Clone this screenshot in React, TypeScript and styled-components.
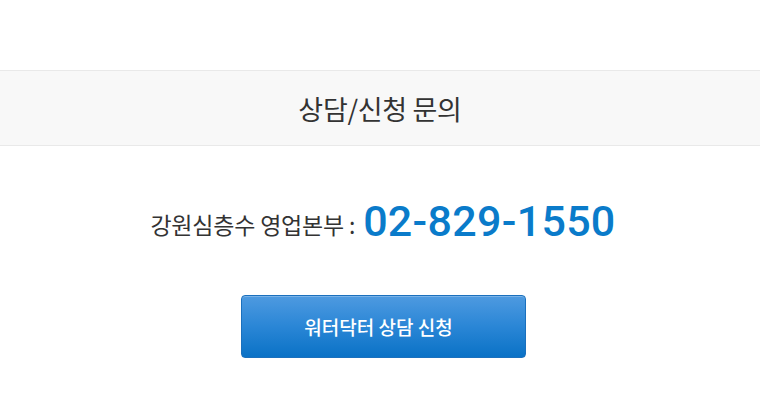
import styled, { createGlobalStyle } from 'styled-components';

const GlobalStyle = createGlobalStyle`
  html, body {
    margin: 0;
    padding: 0;
    background-color: #ffffff;
  }
  body {
    font-family: 'Noto Sans CJK KR', 'Noto Sans', sans-serif;
  }
`;

const App = () => {
  return (
    <>
      <GlobalStyle />
      <PageWrapper>
        <TitleBar>
          <Title>상담/신청 문의</Title>
        </TitleBar>
        <ContactRow>
          <ContactLabel>강원심층수 영업본부 :</ContactLabel>
          <PhoneNumber>02-829-1550</PhoneNumber>
        </ContactRow>
        <ButtonRow>
          <ApplyButton type="button">워터닥터 상담 신청</ApplyButton>
        </ButtonRow>
      </PageWrapper>
    </>
  );
};

const PageWrapper = styled.div`
  width: 760px;
  height: 400px;
  padding-top: 70px;
  box-sizing: border-box;
  display: flex;
  flex-direction: column;
`;

const TitleBar = styled.div`
  height: 76px;
  box-sizing: border-box;
  display: flex;
  align-items: center;
  justify-content: center;
  background-color: #f8f8f8;
  border-top: 1px solid #e9e9e9;
  border-bottom: 1px solid #e9e9e9;
`;

const Title = styled.h2`
  margin: 0;
  font-size: 27px;
  font-weight: 400;
  color: #333333;
  letter-spacing: -0.3px;
`;

const ContactRow = styled.div`
  margin-top: 50px;
  height: 50px;
  display: flex;
  align-items: center;
  justify-content: center;
  gap: 8px;
  padding-left: 6px;
`;

const ContactLabel = styled.span`
  font-size: 23px;
  color: #333333;
  letter-spacing: -0.2px;
  padding-top: 6px;
`;

const PhoneNumber = styled.span`
  font-family: Roboto, 'Noto Sans', sans-serif;
  font-size: 43px;
  font-weight: 500;
  color: #0a7bca;
  letter-spacing: 0.3px;
`;

const ButtonRow = styled.div`
  margin-top: 49px;
  display: flex;
  justify-content: center;
  padding-left: 6px;
`;

const ApplyButton = styled.button`
  width: 285px;
  height: 63px;
  padding: 0 9px 0 0;
  border: 1px solid #1b70bd;
  border-radius: 4px;
  background: linear-gradient(to bottom, #4e9ae0 0%, #2a86d6 50%, #0a72c6 100%);
  color: #ffffff;
  font-family: 'Noto Sans CJK KR', 'Noto Sans', sans-serif;
  font-size: 19px;
  font-weight: 500;
  cursor: pointer;
  box-shadow: inset 0 1px 0 rgba(255, 255, 255, 0.25);
`;

export default App;
